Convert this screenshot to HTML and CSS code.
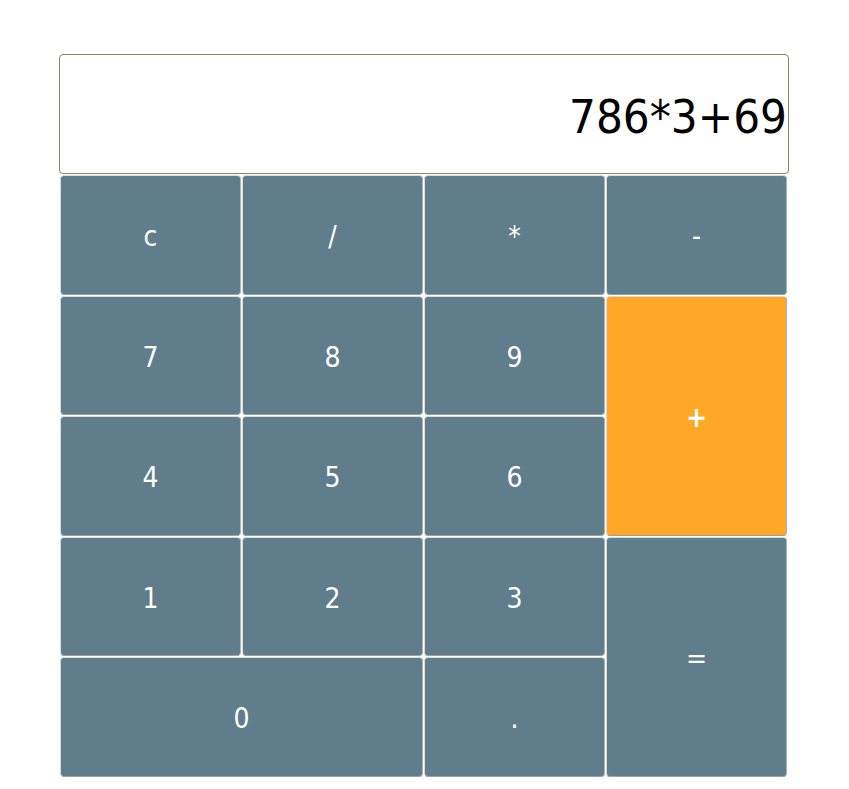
FILE: index.html
```html
<!DOCTYPE html>
<html>
<head>
  <meta charset="UTF-8">
  <title>Calculator</title>
  <link rel="stylesheet" href="styles.css">
</head>
<body>
  <div class="calculator">
    <div class="display">786*3+69</div>
    <div class="keys">
      <button class="key">c</button>
      <button class="key">/</button>
      <button class="key">*</button>
      <button class="key">-</button>
      <button class="key">7</button>
      <button class="key">8</button>
      <button class="key">9</button>
      <button class="key key-plus">+</button>
      <button class="key">4</button>
      <button class="key">5</button>
      <button class="key">6</button>
      <button class="key">1</button>
      <button class="key">2</button>
      <button class="key">3</button>
      <button class="key key-equal">=</button>
      <button class="key key-zero">0</button>
      <button class="key">.</button>
    </div>
  </div>
</body>
</html>
```

FILE: styles.css
```css
body {
  margin: 0;
  background-color: #ffffff;
  font-family: 'DejaVu Sans Condensed', 'DejaVu Sans', sans-serif;
}
.calculator {
  width: 730px;
  margin: 54px 0 0 59px;
}
.display {
  height: 118px;
  border: 1px solid #8f8266;
  border-radius: 4px;
  font-size: 47px;
  line-height: 124px;
  padding-right: 1px;
  text-align: right;
  color: #000000;
  overflow: hidden;
  white-space: nowrap;
}
.keys {
  display: grid;
  grid-template-columns: repeat(4, 181px);
  grid-auto-rows: 119.5px;
  gap: 1px;
  margin: 1px 0 0 1px;
}
.key {
  background-color: #607d8b;
  color: #ffffff;
  font-family: inherit;
  font-size: 28px;
  border: 1px solid #dadada;
  border-right-color: #b0b0b0;
  border-bottom-color: #a0a0a0;
  border-radius: 4px;
  padding: 4px 0 0;
  cursor: pointer;
}
.key-plus {
  grid-column: 4;
  grid-row: 2 / span 2;
  background-color: #ffa726;
  font-weight: bold;
}
.key-equal {
  grid-column: 4;
  grid-row: 4 / span 2;
}
.key-zero {
  grid-column: 1 / span 2;
}
```
